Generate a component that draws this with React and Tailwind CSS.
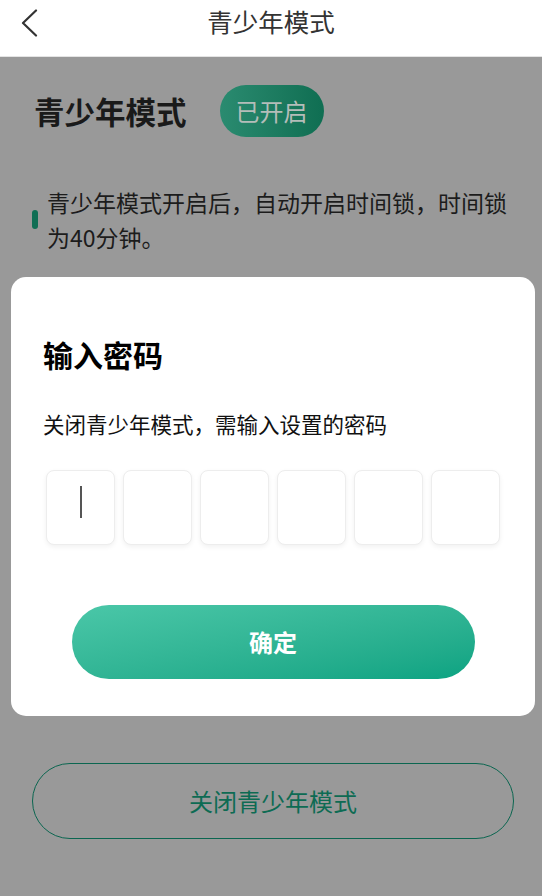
export default function App() {
  const boxes = [0, 1, 2, 3, 4, 5];
  return (
    <div
      className="relative flex h-[896px] w-[542px] flex-col overflow-hidden bg-[#999999]"
      style={{ fontFamily: '"Noto Sans CJK SC", "Noto Sans", sans-serif' }}
    >
      {/* 顶部导航 */}
      <header className="grid h-[57px] shrink-0 grid-cols-[1fr_auto_1fr] border-b border-[#e4e4e4] bg-white">
        <div className="pl-[20px] pt-[9px]">
          <svg width="18" height="28" viewBox="0 0 18 28" fill="none">
            <path d="M16 1.5 L3 14 L16 26.5" stroke="#333" strokeWidth="2.2" strokeLinecap="round" strokeLinejoin="round" />
          </svg>
        </div>
        <h1 className="pt-[3px] text-[25.5px] leading-[36px] text-[#333]">青少年模式</h1>
        <div />
      </header>

      {/* 页面内容（被遮罩） */}
      <section className="flex flex-1 flex-col pl-[32px] pr-[28px]">
        <div className="mt-[28px] flex items-center">
          <h2 className="ml-[2px] text-[30.5px] font-bold leading-[40px] text-[#1a1a1a]">青少年模式</h2>
          <span className="ml-[33px] flex h-[52px] w-[104px] items-center justify-center rounded-full bg-gradient-to-r from-[#2a8b70] to-[#0f6e52] text-[24px] text-[#b4bdb9]">
            已开启
          </span>
        </div>

        <div className="mt-[48px] flex items-center">
          <span className="mt-[-2px] h-[19px] w-[6px] shrink-0 rounded-full bg-[#0f6e54]" />
          <p className="ml-[9px] text-[23px] leading-[35px] text-[#1c1c1c]">
            青少年模式开启后，自动开启时间锁，时间锁为40分钟。
          </p>
        </div>

        <button className="mt-[508px] h-[76px] w-[482px] rounded-full border-[1.5px] border-[#0b6650] text-[24px] text-[#0d6b53]">
          关闭青少年模式
        </button>
      </section>

      {/* 输入密码弹窗 */}
      <div className="absolute left-[11px] top-[277px] flex w-[524px] flex-col rounded-[15px] bg-white pb-[37px] pt-[57px]">
        <h3 className="px-[32px] text-[30px] font-bold leading-[40px] text-black">输入密码</h3>
        <p className="mt-[35px] px-[32px] text-[21.5px] leading-[30px] text-[#111]">
          关闭青少年模式，需输入设置的密码
        </p>
        <div className="mt-[31px] flex gap-[8px] px-[35px]">
          {boxes.map((i) => (
            <div
              key={i}
              className="flex h-[75px] flex-1 items-center justify-center rounded-[8px] border border-[#ededed] bg-white shadow-[0_2px_5px_rgba(0,0,0,0.06)]"
            >
              {i === 0 && <span className="mb-[11px] h-[32px] w-[2px] bg-[#555]" />}
            </div>
          ))}
        </div>
        <button className="mx-auto mt-[60px] flex h-[74px] w-[403px] items-center justify-center rounded-full bg-gradient-to-br from-[#4ac7a8] to-[#09a382] text-[24px] font-bold text-white">
          确定
        </button>
      </div>
    </div>
  );
}
